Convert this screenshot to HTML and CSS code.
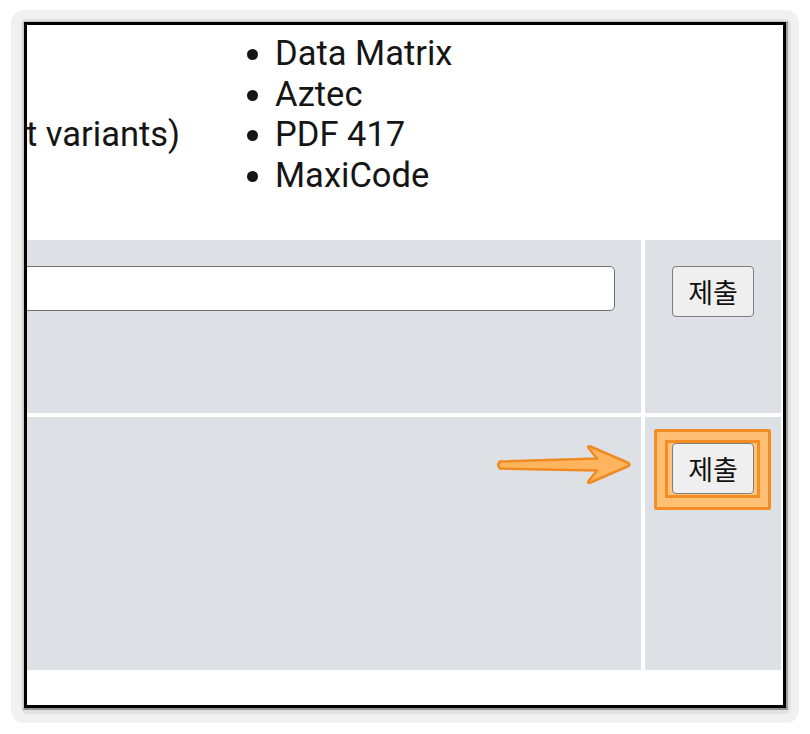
FILE: index.html
```html
<!DOCTYPE html>
<html lang="ko">
<head>
<meta charset="utf-8">
<title>Barcode formats</title>
<link rel="stylesheet" href="styles.css">
</head>
<body>
<div class="shell">
<div class="shade">
<div class="rim">
<div class="frame">
  <div class="viewport">
    <section class="top">
      <div class="lead">t variants)</div>
      <ul class="formats">
        <li>Data Matrix</li>
        <li>Aztec</li>
        <li>PDF 417</li>
        <li>MaxiCode</li>
      </ul>
    </section>
    <div class="grid">
      <div class="cell main first"><input class="field" type="text"></div>
      <div class="cell side"><button class="submit" type="button">제출</button></div>
      <div class="cell main">
        <svg class="arrow" viewBox="495 443 140 44" width="140" height="44" aria-hidden="true">
          <path d="M500 461.5 L597 458.5 L588.5 448 Q587.5 445.5 590.5 446.5 L628.5 463 Q630.5 464.8 628.5 466 L590.5 482.5 Q587.5 483.5 588.5 481 L597 470.5 L500 468.5 Q496.5 465 500 461.5 Z" />
        </svg>
      </div>
      <div class="cell side">
        <span class="highlight"><span class="highlight-inner"></span></span>
        <button class="submit" type="button">제출</button>
      </div>
    </div>
  </div>
</div>
</div>
</div>
</div>
</body>
</html>
```

FILE: styles.css
```css
html, body {
  margin: 0;
  padding: 0;
  background: #ffffff;
}

body {
  font-family: Roboto, "Noto Sans", "Liberation Sans", sans-serif;
  color: #151515;
  padding: 10px 0 0 11px;
}

.shell {
  width: 788px;
  box-sizing: border-box;
  padding: 9px 8px 9px 10px;
  border-radius: 13px;
  background: #f1f1f1;
}

.shade {
  padding: 2px 3px 4px 2px;
  border-radius: 6px;
  background: #e1e1e1;
}

.rim {
  border-style: solid;
  border-width: 1px 2px 2px 1px;
  border-color: #c4c4c4 #9c9c9c #949494 #c4c4c4;
}

.frame {
  box-sizing: border-box;
  width: 762px;
  height: 686px;
  border: 3px solid #000;
  background: #fff;
}

.viewport {
  width: 100%;
  height: 100%;
  overflow: hidden;
  display: flex;
  flex-direction: column;
}

.top {
  height: 215px;
  flex: none;
  display: flex;
  padding-top: 8px;
  box-sizing: border-box;
  font-size: 34.5px;
  line-height: 40.5px;
}

.lead {
  width: 208px;
  padding-top: 81px;
  white-space: nowrap;
  flex: none;
  margin-left: -1px;
}

.formats {
  margin: 0;
  padding-left: 41px;
  list-style: disc;
}

.grid {
  display: grid;
  grid-template-columns: 614px 136px;
  grid-template-rows: 173px 253px;
  gap: 4px;
  margin-right: 2px;
  flex: none;
}

.cell {
  background: #dde1e6;
  position: relative;
}

.main {
  padding: 26px 26px 0 0;
  box-sizing: border-box;
}

.side {
  display: flex;
  justify-content: center;
  align-items: flex-start;
  padding-top: 26px;
  box-sizing: border-box;
}

.field {
  display: block;
  box-sizing: border-box;
  width: calc(100% + 12px);
  margin-left: -12px;
  height: 45px;
  border: 1px solid #6e6e6e;
  border-radius: 5px;
  background: #fff;
  padding: 0 10px;
  font-size: 20px;
}

.submit {
  position: relative;
  z-index: 1;
  box-sizing: border-box;
  width: 82px;
  height: 51px;
  padding: 0;
  border: 1px solid #7d7d7d;
  border-radius: 4px;
  background: #efefef;
  color: #111;
  font-family: "Noto Sans CJK KR", "Noto Sans", sans-serif;
  font-size: 27px;
  line-height: 1;
}

.arrow {
  position: absolute;
  left: 468px;
  top: 26px;
  overflow: visible;
}

.arrow path {
  fill: #ffb45e;
  stroke: #f08a22;
  stroke-width: 2.5;
  stroke-linejoin: round;
}

.highlight {
  position: absolute;
  left: 9px;
  top: 12px;
  width: 117px;
  height: 81px;
  box-sizing: border-box;
  border: 3px solid #f48d24;
  border-radius: 2px;
  background: #ffc075;
  z-index: 0;
}

.highlight-inner {
  position: absolute;
  left: 8px;
  top: 8px;
  width: 95px;
  height: 58px;
  box-sizing: border-box;
  border: 3px solid #f48d24;
  background: #ffc47c;
}
```
